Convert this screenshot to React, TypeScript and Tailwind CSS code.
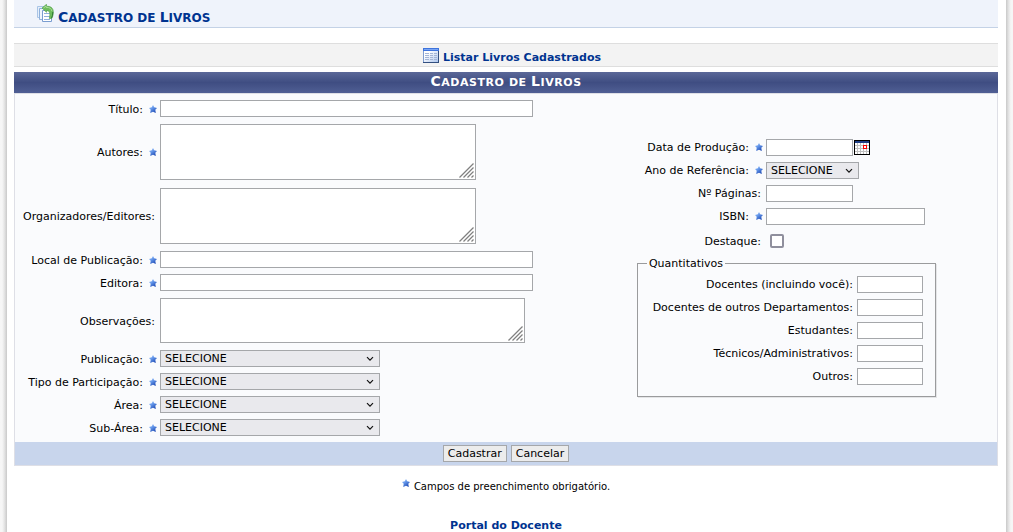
import type { ReactNode } from "react";

function Star() {
  return (
    <svg width="8" height="8" viewBox="0 0 8 8" className="shrink-0" aria-hidden="true">
      <defs>
        <linearGradient id="star" x1="0" y1="0" x2="0.7" y2="1">
          <stop offset="0" stopColor="#a4caff" />
          <stop offset="0.45" stopColor="#6598ea" />
          <stop offset="1" stopColor="#1c48b4" />
        </linearGradient>
      </defs>
      <path d="M4 0 5.2 2.3 8 2.9 6.3 4.8 6.8 8 4 6.8 1.2 8 1.7 4.8 0 2.9 2.8 2.3Z" fill="url(#star)" />
    </svg>
  );
}

function PagesIcon() {
  return (
    <svg width="17" height="18" viewBox="0 0 17 18" aria-hidden="true">
      <path d="M.5 2.500h8v11h-8z" fill="#e4eefa" stroke="#a9c4e6" />
      <path d="M2.500 4.500h8v11h-8z" fill="#eef5fd" stroke="#8fb1dc" />
      <path d="M5.500 6.500h9v11h-9z" fill="#fff" stroke="#7a9dd0" />
      <path d="M7 9.500h6M7 12.500h6M7 15.500h6" stroke="#8fb0dc" />
      <path d="M5 4 9.500.3v2c4-.2 6.800 1.500 6.800 5.700 0 2.600-.5 4.800-1.600 6.500h-2.400c.7-2.600.7-5 .1-6.200-.5-1.200-1.400-1.600-2.900-1.600v1.600z" fill="#6fbd5d" stroke="#4c9c45" strokeWidth=".6" />
      <path d="M6.500 4 9 2v1.300c3.500 0 5.500 1.100 5.900 3.900" fill="none" stroke="#a9dd96" />
      <path d="M15.800 8c0 2.400-.4 4.300-1.300 6" fill="none" stroke="#2f7a34" />
    </svg>
  );
}

function TableIcon() {
  return (
    <svg width="16" height="15" viewBox="0 0 16 15" aria-hidden="true">
      <defs>
        <linearGradient id="sheet" x1="0" y1="0" x2="1" y2="1">
          <stop offset="0.3" stopColor="#fff" />
          <stop offset="1" stopColor="#a9c3ee" />
        </linearGradient>
      </defs>
      <path d="M.5.5h15v14H.5z" fill="url(#sheet)" stroke="#7f9dd0" />
      <path d="M0 0h16v3H0z" fill="#3f74dc" />
      <path d="M1 1h14v1H1z" fill="#79a5f5" />
      <path d="M2 5.500h4M7 5.500h3M11 5.500h3M2 7.500h4M7 7.500h3M11 7.500h3M2 9.500h4M7 9.500h3M11 9.500h3M2 11.500h4M7 11.500h3M11 11.500h3" stroke="#a3b5d6" />
      <path d="M15.500 3v12M0 14.500h16" stroke="#334f80" />
    </svg>
  );
}

function CalendarIcon() {
  return (
    <svg width="16" height="15" viewBox="0 0 16 15" shapeRendering="crispEdges" aria-hidden="true">
      <path d="M0 0h16v15H0z" fill="#000" />
      <path d="M1 1h14v2H1z" fill="#1f3f86" />
      <path d="M1 3h14v11H1z" fill="#fff" />
      <path d="M1 5.500h14M1 8.500h14M1 11.500h14M3.500 3v11M6.500 3v11M9.500 3v11M12.500 3v11" stroke="#c0c0c0" />
      <path d="M9.500 5.500h3v3h-3z" fill="#fff" stroke="#f00" />
    </svg>
  );
}

type RowProps = { id: string; label: string; required?: boolean; className: string; children: ReactNode };

function Row({ id, label, required, className, children }: RowProps) {
  return (
    <div className={`flex items-center ${className}`}>
      <div className="flex shrink-0 basis-[145px] items-center justify-end gap-1.5 pr-[3px]">
        <label htmlFor={id} className={required ? "pt-0.5 whitespace-nowrap" : "pt-0.5 pr-0.5 whitespace-nowrap"}>{label}</label>
        {required && <Star />}
      </div>
      {children}
    </div>
  );
}

function TextInput({ id, className }: { id: string; className: string }) {
  return <input id={id} type="text" className={`h-[17px] min-w-0 border border-[#a5a7aa] bg-white px-1 ${className}`} />;
}

function TextArea({ id, className }: { id: string; className: string }) {
  return (
    <div className={`relative min-w-0 ${className}`}>
      <textarea id={id} className="block size-full resize-none border border-[#a5a7aa] bg-white px-1" />
      <svg width="15" height="15" viewBox="0 0 15 15" className="pointer-events-none absolute right-0.5 bottom-0.5" aria-hidden="true">
        <path d="M.5 14.500 14.500.5M4.500 14.500l10-10M8.500 14.500l6-6M12.500 14.500l2-2" stroke="#808080" strokeWidth="1.3" />
      </svg>
    </div>
  );
}

function Select({ id, className }: { id: string; className: string }) {
  return (
    <div className={`relative min-w-0 ${className}`}>
      <select id={id} className="block h-[17px] w-full appearance-none border border-[#a5a7aa] bg-[#e9e9ed] pl-1 leading-[15px]">
        <option>SELECIONE</option>
      </select>
      <svg width="8" height="6" viewBox="0 0 8 6" className="pointer-events-none absolute top-1.5 right-1.5" aria-hidden="true">
        <path d="M1 1.200 4 4.200 7 1.200" fill="none" stroke="#111" strokeWidth="1.200" />
      </svg>
    </div>
  );
}

const quantitativos = [
  { id: "docentes", label: "Docentes (incluindo você):" },
  { id: "outros-dep", label: "Docentes de outros Departamentos:" },
  { id: "estudantes", label: "Estudantes:" },
  { id: "tecnicos", label: "Técnicos/Administrativos:" },
  { id: "outros", label: "Outros:" },
];

export default function App() {
  return (
    <div className="flex min-h-screen bg-white font-['DejaVu_Sans',Verdana,sans-serif] text-[11px] leading-4 text-black">
      <div className="w-[7px] shrink-0 bg-linear-to-r from-[#f6f6f6] from-30% via-[#e6e6e6] via-60% to-[#c9c9c9]" />
      <main className="min-w-0 flex-1 pr-2 pl-[7px]">
        <header className="flex h-7 items-center gap-1 border-b border-[#c4d2e6] bg-[#eff3fb] pl-[23px]">
          <div className="self-start pt-1">
            <PagesIcon />
          </div>
          <h1 className="pt-2 text-xs leading-4 font-bold text-[#003390] uppercase">
            <span className="inline-block first-letter:text-sm first-letter:leading-4">Cadastro</span> <span>de</span>{" "}
            <span className="inline-block first-letter:text-sm first-letter:leading-4">Livros</span>
          </h1>
        </header>

        <div className="mt-[15px] flex h-6 items-center justify-center border-y border-[#dedede] bg-[#f3f3f3] pl-3">
          <a href="#listar" className="flex items-center gap-1 font-bold text-[#003390]">
            <TableIcon />
            <span className="pt-1.5">Listar Livros Cadastrados</span>
          </a>
        </div>

        <form className="mt-[5px]" onSubmit={(e) => e.preventDefault()}>
          <h2 className="h-[21px] bg-linear-to-b from-[#5b6898] via-[#3f4d82] to-[#505f94] text-center text-[11px] leading-[21px] font-bold tracking-wider text-white uppercase">
            <span className="inline-block first-letter:text-sm first-letter:leading-4">Cadastro</span> <span>de</span>{" "}
            <span className="inline-block first-letter:text-sm first-letter:leading-4">Livros</span>
          </h2>
          <div className="border border-[#dedfe6] bg-[#fafbfd]">
            <div className="grid grid-cols-[19fr_11fr] items-center py-[3px]">
              <div className="min-w-0">
                <Row id="titulo" label="Título:" required className="h-[23px]">
                  <TextInput id="titulo" className="w-[373px]" />
                </Row>
                <Row id="autores" label="Autores:" required className="h-16">
                  <TextArea id="autores" className="h-14 w-[316px]" />
                </Row>
                <Row id="organizadores" label="Organizadores/Editores:" className="h-16">
                  <TextArea id="organizadores" className="h-14 w-[316px]" />
                </Row>
                <Row id="local" label="Local de Publicação:" required className="h-[23px]">
                  <TextInput id="local" className="w-[373px]" />
                </Row>
                <Row id="editora" label="Editora:" required className="h-[23px]">
                  <TextInput id="editora" className="w-[373px]" />
                </Row>
                <Row id="observacoes" label="Observações:" className="h-[53px]">
                  <TextArea id="observacoes" className="h-[45px] w-[365px]" />
                </Row>
                <Row id="publicacao" label="Publicação:" required className="h-[23px]">
                  <Select id="publicacao" className="w-[220px]" />
                </Row>
                <Row id="participacao" label="Tipo de Participação:" required className="h-[23px]">
                  <Select id="participacao" className="w-[220px]" />
                </Row>
                <Row id="area" label="Área:" required className="h-[23px]">
                  <Select id="area" className="w-[220px]" />
                </Row>
                <Row id="subarea" label="Sub-Área:" required className="h-[23px]">
                  <Select id="subarea" className="w-[220px]" />
                </Row>
              </div>

              <div className="min-w-0">
                <div className="-ml-4">
                  <Row id="data" label="Data de Produção:" required className="h-[23px]">
                    <TextInput id="data" className="w-[87px]" />
                    <button type="button" aria-label="Abrir calendário" className="ml-px">
                      <CalendarIcon />
                    </button>
                  </Row>
                  <Row id="ano" label="Ano de Referência:" required className="h-[23px]">
                    <Select id="ano" className="w-[93px]" />
                  </Row>
                  <Row id="paginas" label="Nº Páginas:" className="h-[23px]">
                    <TextInput id="paginas" className="w-[87px]" />
                  </Row>
                  <Row id="isbn" label="ISBN:" required className="h-[23px]">
                    <TextInput id="isbn" className="w-[159px]" />
                  </Row>
                  <Row id="destaque" label="Destaque:" className="h-[26px]">
                    <input id="destaque" type="checkbox" className="ml-1 size-3.5 appearance-none rounded-xs border-2 border-[#8f8f9d] bg-white checked:bg-[#0060df]" />
                  </Row>
                </div>
                <fieldset className="mt-0.5 mb-1 w-[299px] border border-[#9a9b9d] pt-px pr-3 pb-2 pl-[9px] shadow-[1px_1px_0_#e4e5e7]">
                  <legend className="px-0.5">Quantitativos</legend>
                  {quantitativos.map((q) => (
                    <div key={q.id} className="flex h-[23px] items-center justify-end gap-1">
                      <label htmlFor={q.id} className="pt-0.5 whitespace-nowrap">{q.label}</label>
                      <TextInput id={q.id} className="w-[66px]" />
                    </div>
                  ))}
                </fieldset>
              </div>
            </div>
            <div className="flex h-[23px] items-center justify-center gap-1 bg-[#c8d5ec]">
              <button type="submit" className="h-[17px] border border-[#a5a7aa] bg-[#ececec] px-1 leading-[15px]">Cadastrar</button>
              <button type="button" className="h-[17px] border border-[#a5a7aa] bg-[#ececec] px-1 leading-[15px]">Cancelar</button>
            </div>
          </div>
        </form>

        <p className="mt-3 flex justify-center gap-1 text-[10px]">
          <span className="pt-px">
            <Star />
          </span>
          <span className="pt-px">Campos de preenchimento obrigatório.</span>
        </p>
        <p className="mt-[23px] text-center">
          <a href="#portal" className="font-bold text-[#003390]">Portal do Docente</a>
        </p>
      </main>
      <div className="w-[7px] shrink-0 bg-linear-to-l from-[#f6f6f6] from-30% via-[#e6e6e6] via-60% to-[#c9c9c9]" />
    </div>
  );
}
